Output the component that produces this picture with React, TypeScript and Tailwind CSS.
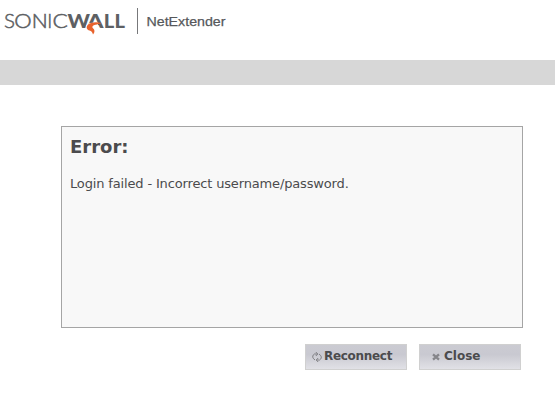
import type { ReactNode } from "react";

function Logo() {
  return (
    <svg width="128" height="36" viewBox="0 0 128 36" role="img" aria-label="SonicWall">
      <g fill="#5d6063" fontFamily="Lato, 'Liberation Sans', sans-serif" fontSize="19.2">
        <g fontWeight="300" stroke="#5d6063" strokeWidth="0.5">
          <text x="4" y="28" textLength="11" lengthAdjust="spacingAndGlyphs">S</text>
          <text x="14.2" y="28" textLength="17.4" lengthAdjust="spacingAndGlyphs">O</text>
          <text x="31.8" y="28" textLength="16" lengthAdjust="spacingAndGlyphs">N</text>
          <text x="47.2" y="28">I</text>
          <text x="52.5" y="28" textLength="15.3" lengthAdjust="spacingAndGlyphs">C</text>
        </g>
        <g fontWeight="900">
          <text x="67.5" y="28" textLength="22.5" lengthAdjust="spacingAndGlyphs">W</text>
          <text x="87" y="28" textLength="16.5" lengthAdjust="spacingAndGlyphs">A</text>
          <text x="103.8" y="28" textLength="10.5" lengthAdjust="spacingAndGlyphs">L</text>
          <text x="114.4" y="28" textLength="10.5" lengthAdjust="spacingAndGlyphs">L</text>
        </g>
      </g>
      <path d="M86 29V25.5L89.5 23L98 22.6V25L95 26L94 29L92 30Z" fill="#fff" />
      <path
        d="M101.5 23C96 21.4 90 22.2 87.6 25C85.8 27.4 86.8 29.8 89.5 30.5C91.3 31 92.4 32 93 34.5C95.2 32 94.8 29.8 93 28.2C91.6 26.7 92.8 25.2 95.5 24.7C97.5 24.3 99.8 24 101.5 23Z"
        fill="#e8622c"
      />
    </svg>
  );
}

function ReconnectIcon() {
  return (
    <svg width="10" height="12" viewBox="0 0 10 12" fill="none" stroke="#808084" strokeWidth="1">
      <path d="M3 9L1.2 7.3C.2 5.8.8 4 2.3 3H5.5M3.8 1L5.8 3L3.8 5" />
      <path d="M7 3L8.8 4.7C9.8 6.2 9.2 8 7.7 9H4.5M6.2 7L4.2 9L6.2 11" />
    </svg>
  );
}

function CloseIcon() {
  return (
    <svg width="8" height="8" viewBox="0 0 8 8" stroke="#85858a" strokeWidth="2.3">
      <path d="M1 1.3L7 6.7M7 1.3L1 6.7" />
    </svg>
  );
}

function ActionButton({ icon, label, pad }: { icon: ReactNode; label: string; pad: string }) {
  return (
    <button
      className={`flex h-[26px] w-[102px] items-start border border-[#d0d0d0] bg-linear-to-b from-[#cbcbd2] via-[#c9c9d1] via-40% to-[#e1e1e6] text-xs font-bold text-[#4b4b4d] ${pad}`}
    >
      <span className="flex h-[23px] items-center">{icon}</span>
      <span className="h-[22px] leading-[22px]">{label}</span>
    </button>
  );
}

export default function App() {
  return (
    <div className="h-[409px] w-[555px] overflow-hidden bg-white font-['DejaVu_Sans',sans-serif] text-[#4b4b4d]">
      <header className="flex h-[60px] items-start">
        <Logo />
        <div className="mt-2 ml-[9px] h-[26px] w-px bg-[#77787a]" />
        <svg className="ml-2" width="84" height="36" role="img" aria-label="NetExtender">
          <text x="0.5" y="26" textLength="79" lengthAdjust="spacingAndGlyphs" fill="#56585b" stroke="#56585b" strokeWidth="0.25" fontFamily="'Liberation Sans', sans-serif" fontSize="13.7">NetExtender</text>
        </svg>
      </header>
      <div className="h-[25px] bg-[#d7d7d7]" />
      <main className="mt-[41px] ml-[61px] w-[462px]">
        <section className="h-[202px] border border-[#a5a5a5] bg-[#f8f8f8] px-2 pt-2">
          <h1 className="text-lg leading-6 font-bold">Error:</h1>
          <p className="mt-[15px] text-[13px] leading-5 tracking-[-0.15px]">Login failed - Incorrect username/password.</p>
        </section>
        <div className="mt-4 flex justify-end gap-3 pr-0.5">
          <ActionButton icon={<ReconnectIcon />} label="Reconnect" pad="gap-[2px] pl-[6px] tracking-[-0.3px]" />
          <ActionButton icon={<CloseIcon />} label="Close" pad="gap-[4px] pl-[12px]" />
        </div>
      </main>
    </div>
  );
}
